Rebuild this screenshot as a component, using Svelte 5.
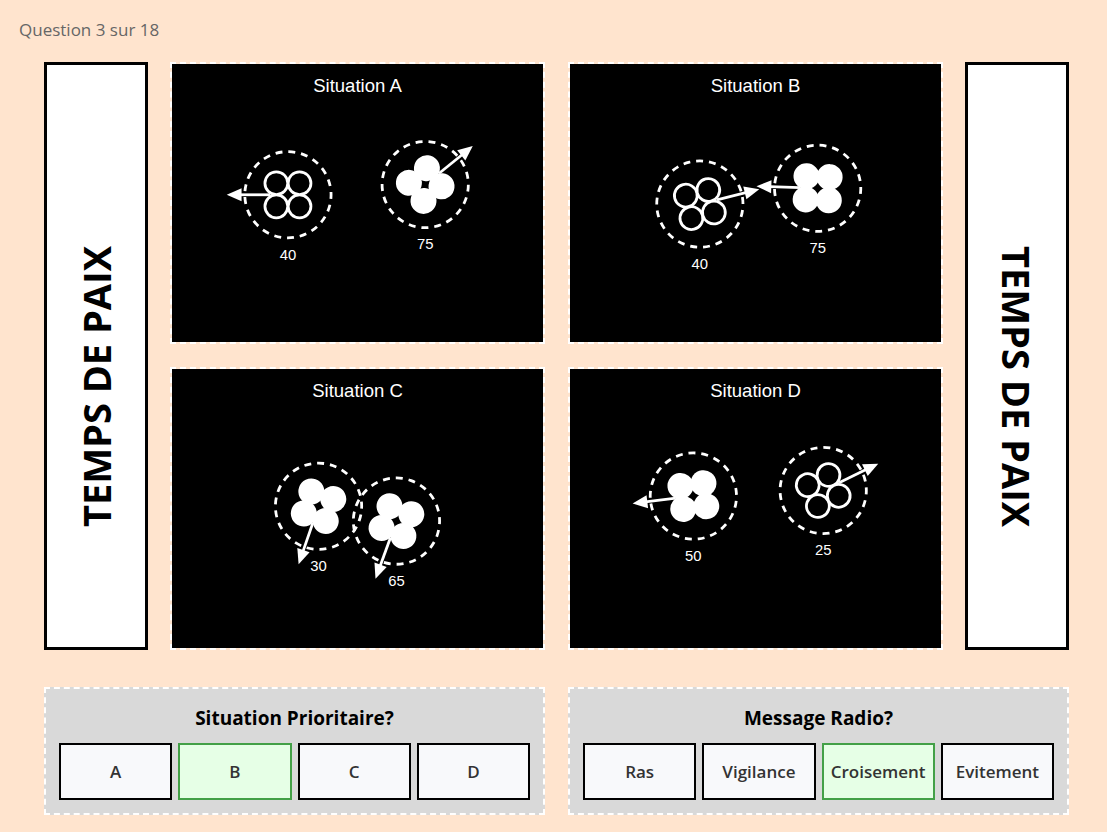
<script lang="ts">
  type Ship = {
    x: number;
    y: number;
    heading: number; // degrees, clockwise from the right
    speed: number;
    filled: boolean;
  };

  type Situation = { name: string; ships: Ship[] };

  const current = 3;
  const total = 18;
  const banner = "TEMPS DE PAIX";

  const situations: Situation[] = [
    {
      name: "A",
      ships: [
        { x: 125, y: 141, heading: 180, speed: 40, filled: false },
        { x: 273, y: 130, heading: -39, speed: 75, filled: true },
      ],
    },
    {
      name: "B",
      ships: [
        { x: 140, y: 151, heading: -14, speed: 40, filled: false },
        { x: 267, y: 134, heading: 182, speed: 75, filled: true },
      ],
    },
    {
      name: "C",
      ships: [
        { x: 158, y: 148, heading: 109, speed: 30, filled: true },
        { x: 242, y: 164, heading: 110, speed: 65, filled: true },
      ],
    },
    {
      name: "D",
      ships: [
        { x: 133, y: 137, heading: 173, speed: 50, filled: true },
        { x: 273, y: 131, heading: -26, speed: 25, filled: false },
      ],
    },
  ];

  // Rotor centres around the body
  const rotors = [
    [-12.5, -12.5],
    [12.5, -12.5],
    [-12.5, 12.5],
    [12.5, 12.5],
  ];

  const priorities = ["A", "B", "C", "D"];
  const messages = ["Ras", "Vigilance", "Croisement", "Evitement"];

  let priority = $state("B");
  let message = $state("Croisement");
</script>

<main class="quiz">
  <p class="progress">Question {current} sur {total}</p>

  <div class="board">
    <aside class="banner left"><span>{banner}</span></aside>

    <div class="situations">
      {#each situations as situation}
        <div class="situation">
          <svg viewBox="0 0 400 300" role="img" aria-label="Situation {situation.name}">
            <text class="title" x="200" y="30">Situation {situation.name}</text>
            {#each situation.ships as ship}
              <g transform="translate({ship.x} {ship.y})">
                <g transform="rotate({ship.heading})">
                  <circle class="zone" r="46.5" pathLength="210" />
                  <line class="shaft" x1="19" y1="0" x2="52" y2="0" />
                  <polygon class="head" points="66,0 50,-7 50,7" />
                  {#each rotors as [cx, cy]}
                    <circle class="rotor" class:filled={ship.filled} {cx} {cy} r={ship.filled ? 14 : 12.3} />
                  {/each}
                </g>
                <text class="speed" y="70">{ship.speed}</text>
              </g>
            {/each}
          </svg>
        </div>
      {/each}
    </div>

    <aside class="banner right"><span>{banner}</span></aside>
  </div>

  <div class="questions">
    <section class="question">
      <h2>Situation Prioritaire?</h2>
      <div class="answers">
        {#each priorities as option}
          <button
            class="answer"
            class:selected={priority === option}
            aria-pressed={priority === option}
            onclick={() => (priority = option)}
          >
            {option}
          </button>
        {/each}
      </div>
    </section>

    <section class="question">
      <h2>Message Radio?</h2>
      <div class="answers">
        {#each messages as option}
          <button
            class="answer"
            class:selected={message === option}
            aria-pressed={message === option}
            onclick={() => (message = option)}
          >
            {option}
          </button>
        {/each}
      </div>
    </section>
  </div>
</main>

<style>
  :global(body) {
    margin: 0;
    background: #ffe4ce;
  }

  .quiz {
    box-sizing: border-box;
    min-height: 100vh;
    padding: 18px 38px 17px 44px;
    background: #ffe4ce;
    font-family: "Segoe UI", "Open Sans", "Noto Sans", sans-serif;
    color: #000;
  }

  .progress {
    margin: 0 0 20px -25px;
    font-size: 17px;
    line-height: 24px;
    color: #666;
  }

  .board {
    display: grid;
    grid-template-columns: 104px 1fr 104px;
    gap: 22px;
  }

  .banner {
    box-sizing: border-box;
    display: flex;
    align-items: center;
    justify-content: center;
    padding-top: 62px;
    border: 3px solid #000;
    background: #fff;
    font-size: 38px;
    font-weight: 700;
    line-height: 52px;
    white-space: nowrap;
  }

  .banner span {
    writing-mode: vertical-rl;
  }

  .banner.left span {
    transform: rotate(180deg);
  }

  .situations {
    display: grid;
    grid-template-columns: 1fr 1fr;
    gap: 23px;
  }

  .situation {
    border: 2px dashed #fff;
  }

  .situation svg {
    display: block;
    width: 100%;
    background: #000;
    font-family: "Liberation Sans", Arial, sans-serif;
  }

  .title,
  .speed {
    fill: #fff;
    text-anchor: middle;
  }

  .title {
    font-size: 20px;
  }

  .speed {
    font-size: 16px;
  }

  .zone {
    fill: none;
    stroke: #fff;
    stroke-width: 3;
    /* 21 dashes, with a gap where the arrow leaves */
    stroke-dasharray: 5.4 4.6;
    stroke-dashoffset: -2.8;
  }

  .shaft {
    stroke: #fff;
    stroke-width: 3;
  }

  .head {
    fill: #fff;
  }

  .rotor {
    fill: #000;
    stroke: #fff;
    stroke-width: 3;
  }

  .rotor.filled {
    fill: #fff;
    stroke: none;
  }

  .questions {
    display: grid;
    grid-template-columns: 1fr 1fr;
    gap: 23px;
    margin-top: 37px;
  }

  .question {
    padding: 13px;
    border: 2px dashed #fff;
    background: #d9d9d9;
  }

  .question h2 {
    margin: 2px 0 11px;
    font-size: 19px;
    font-weight: 700;
    line-height: 28px;
    text-align: center;
  }

  .answers {
    display: grid;
    grid-template-columns: repeat(4, 1fr);
    gap: 6px;
  }

  .answer {
    min-width: 0;
    height: 57px;
    padding: 0;
    border: 2px solid #000;
    background: #f8f9fb;
    font-family: inherit;
    font-size: 17px;
    font-weight: 600;
    color: #333;
    cursor: pointer;
  }

  .answer.selected {
    border-color: #43a047;
    background: #e6ffe6;
  }
</style>
